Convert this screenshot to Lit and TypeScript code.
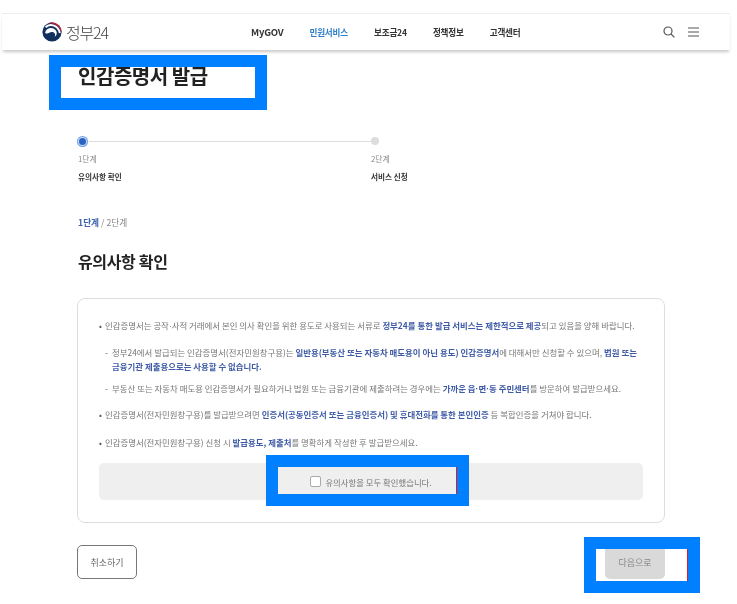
import { LitElement, html, css } from "lit";
import { customElement } from "lit/decorators.js";

@customElement("app-root")
export class AppRoot extends LitElement {
  static styles = css`
    :host {
      display: block;
      position: relative;
      width: 737px;
      height: 604px;
      overflow: hidden;
      background: #fff;
      font-family: "Noto Sans CJK KR", "Noto Sans", sans-serif;
      color: #222;
    }
    .header {
      margin: 13px 7px 0 2px;
      height: 37px;
      box-sizing: border-box;
      border-top: 1px solid #eee;
      box-shadow: 0 3px 3px -1px rgba(0, 0, 0, 0.22);
      display: flex;
      align-items: center;
      padding: 0 31px 1px 40px;
      position: relative;
      background: #fff;
      filter: blur(0.3px);
    }
    .logo { display: flex; align-items: center; gap: 4px; width: 209px; }
    .logo svg { display: block; }
    .brand { font-size: 16px; color: #444; letter-spacing: -1.2px; line-height: 20px; font-weight: 300; }
    .nav { display: flex; gap: 26px; flex: 1; }
    .nav span { font-size: 8.6px; font-weight: 700; color: #333; line-height: 14px; letter-spacing: -0.2px; }
    .nav .en { font-size: 9.5px; letter-spacing: -0.2px; }
    .nav .on { color: #2f80c8; }
    .tools { display: flex; gap: 13px; align-items: center; }
    .tools svg { display: block; }
    main { margin-left: 78px; width: 587px; filter: blur(0.3px); }
    h1 { margin: 0; padding-top: 12px; font-size: 20px; line-height: 28px; font-weight: 700; color: #222; letter-spacing: -0.45px; }
    .stepper { margin-top: 45px; position: relative; height: 48px; }
    .track { display: flex; align-items: center; height: 12px; margin-left: -1px; width: 302px; }
    .dot-on { width: 7px; height: 7px; border-radius: 50%; background: #2b63c0; box-shadow: 0 0 0 1px #cfe0fa, 0 0 0 2px #6d9be6; margin-left: 2px; flex: none; }
    .line { flex: 1; height: 1px; background: #ddd; margin-left: 3px; }
    .dot-off { width: 8px; height: 8px; border-radius: 50%; background: #ddd; flex: none; }
    .steps { display: grid; grid-template-columns: 293px auto; margin-top: 6px; }
    .step-n { font-size: 7.8px; line-height: 12px; color: #888; }
    .step-t { font-size: 7.6px; line-height: 12px; color: #333; font-weight: 700; margin-top: 6px; }
    .crumb { margin-top: 33px; font-size: 8.7px; line-height: 14px; color: #888; }
    .crumb b { color: #3f64ae; font-weight: 700; }
    h2 { margin: 19px 0 0; font-size: 16px; line-height: 24px; font-weight: 700; color: #222; letter-spacing: -0.35px; }
    .card {
      margin: 25px 0 0 -1px;
      width: 588px;
      box-sizing: border-box;
      height: 225px;
      border: 1px solid #ddd;
      border-radius: 8px;
      padding: 19px 21px 22px;
    }
    .note { font-size: 8.43px; line-height: 14px; color: #777; position: relative; padding-left: 6px; }
    .note::before { content: "•"; position: absolute; left: 0; top: 0; color: #555; }
    .note b { color: #3f5ba6; font-weight: 700; }
    .md { font-family: "Liberation Sans", sans-serif; }
    .sub { padding-left: 13px; margin-top: 12px; }
    .sub::before { content: "-"; left: 6px; }
    .g8 { margin-top: 8px; }
    .g11 { margin-top: 11px; }
    .g14 { margin-top: 14px; }
    .check {
      margin-top: 14px;
      height: 37px;
      border-radius: 5px;
      background: #efefef;
      display: flex;
      align-items: center;
      justify-content: center;
      gap: 4px;
      font-size: 8.4px;
      color: #777;
    }
    .box { box-sizing: border-box; width: 11px; height: 11px; border: 1px solid #aaa; border-radius: 2px; background: #fff; }
    .actions { display: flex; justify-content: space-between; margin: 22px 0 0 -1px; width: 588px; }
    .btn {
      box-sizing: border-box;
      width: 60px;
      height: 34px;
      border-radius: 5px;
      display: flex;
      align-items: center;
      justify-content: center;
      font-size: 9px;
    }
    .cancel { border: 1.5px solid #777; color: #666; }
    .next { background: #d9d9d9; color: #888; }
    .mark { position: absolute; box-sizing: border-box; border: 12px solid #0080ff; }
    .red::after { content: ""; position: absolute; top: 0; bottom: 0; right: 0; width: 1px; background: #e01b24; }
    .m1 { left: 49px; top: 55px; width: 218px; height: 55px; }
    .m2 { left: 266px; top: 455px; width: 203px; height: 51px; }
    .m3 { left: 584px; top: 537px; width: 116px; height: 56px; }
  `;

  render() {
    return html`
      <header class="header">
        <div class="logo">
          <svg width="20" height="20" viewBox="0 0 20 20">
            <circle cx="10" cy="10" r="9.6" fill="#12305e"/>
            <path d="M3.6 5.2C7 1.6 15.6 2 17.9 11" fill="none" stroke="#fff" stroke-width="2"/>
            <path d="M5.5 1.5A9.6 9.6 0 0 1 19.5 11.4A12 12 0 0 0 5.5 1.5Z" fill="#c8243c"/>
            <path d="M3.2 11C3.6 6.4 9 5 12 6.8C15.6 9 15.6 13 12.6 15C14 12.4 12.6 10 10 10C7 10 6 12.8 3.2 11Z" fill="#fff"/>
          </svg>
          <span class="brand">정부24</span>
        </div>
        <nav class="nav">
          <span class="en">MyGOV</span><span class="on">민원서비스</span><span>보조금24</span><span>정책정보</span><span>고객센터</span>
        </nav>
        <div class="tools">
          <svg width="12" height="12" viewBox="0 0 12 12" fill="none" stroke="#555" stroke-width="1.2">
            <circle cx="5" cy="5" r="4"/><path d="M8 8l3.4 3.4"/>
          </svg>
          <svg width="11" height="10" viewBox="0 0 11 10" fill="none" stroke="#555" stroke-width="1">
            <path d="M0 1h11M0 5h11M0 9h11"/>
          </svg>
        </div>
      </header>
      <main>
        <h1>인감증명서 발급</h1>
        <section class="stepper">
          <div class="track"><span class="dot-on"></span><span class="line"></span><span class="dot-off"></span></div>
          <div class="steps">
            <div><div class="step-n">1단계</div><div class="step-t">유의사항 확인</div></div>
            <div><div class="step-n">2단계</div><div class="step-t">서비스 신청</div></div>
          </div>
        </section>
        <div class="crumb"><b>1단계</b> / 2단계</div>
        <h2>유의사항 확인</h2>
        <section class="card">
          <div class="note">인감증명서는 공작<span class="md">·</span>사적 거래에서 본인 의사 확인을 위한 용도로 사용되는 서류로 <b>정부24를 통한 발급 서비스는 제한적으로 제공</b>되고 있음을 양해 바랍니다.</div>
          <div class="note sub">정부24에서 발급되는 인감증명서(전자민원창구용)는 <b>일반용(부동산 또는 자동차 매도용이 아닌 용도) 인감증명서</b>에 대해서만 신청할 수 있으며, <b>법원 또는</b><br><b>금융기관 제출용으로는 사용할 수 없습니다.</b></div>
          <div class="note sub g8">부동산 또는 자동차 매도용 인감증명서가 필요하거나 법원 또는 금융기관에 제출하려는 경우에는 <b>가까운 읍<span class="md">·</span>면<span class="md">·</span>동 주민센터</b>를 방문하여 발급받으세요.</div>
          <div class="note g11">인감증명서(전자민원창구용)를 발급받으려면 <b>인증서(공동인증서 또는 금융인증서) 및 휴대전화를 통한 본인인증</b> 등 복합인증을 거쳐야 합니다.</div>
          <div class="note g14">인감증명서(전자민원창구용) 신청 시 <b>발급용도, 제출처</b>를 명확하게 작성한 후 발급받으세요.</div>
          <label class="check"><span class="box"></span>유의사항을 모두 확인했습니다.</label>
        </section>
        <div class="actions">
          <div class="btn cancel">취소하기</div>
          <div class="btn next">다음으로</div>
        </div>
      </main>
      <div class="mark m1"></div>
      <div class="mark m2 red"></div>
      <div class="mark m3 red"></div>
    `;
  }
}
